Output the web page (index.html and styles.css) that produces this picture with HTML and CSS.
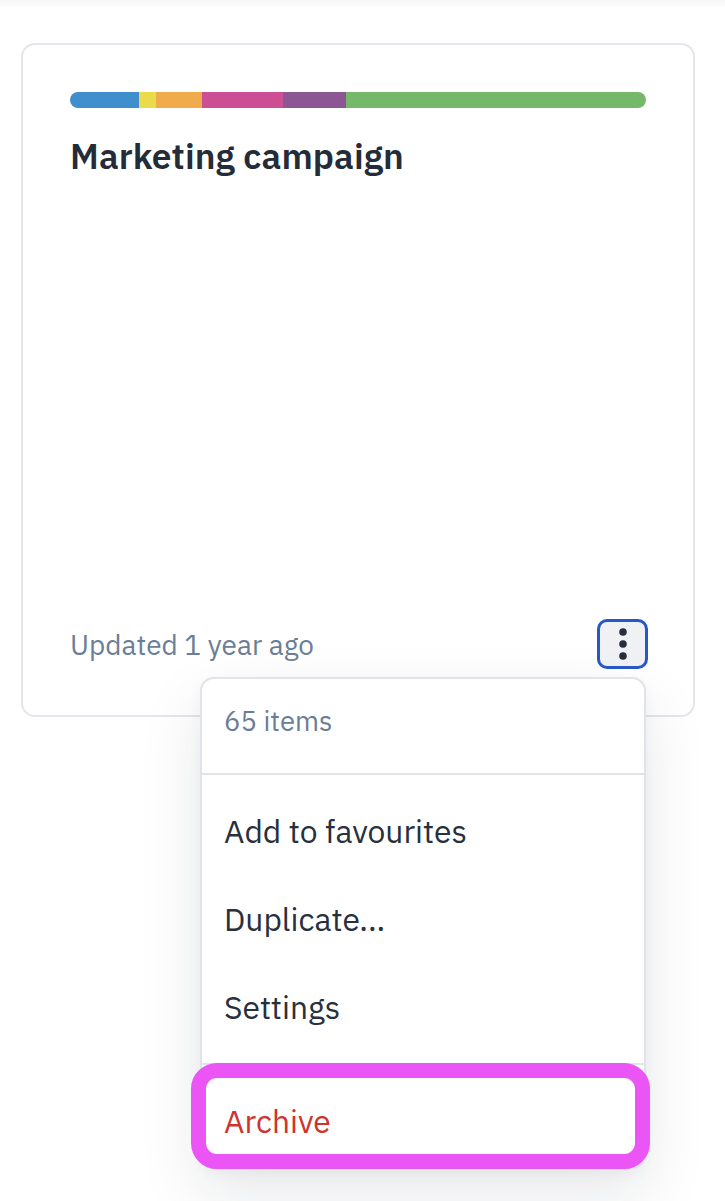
FILE: index.html
```html
<!DOCTYPE html>
<html>
<head>
<meta charset="utf-8">
<link rel="stylesheet" href="styles.css">
</head>
<body>
<div class="topbar"></div>
<main class="page">
  <div class="card-wrap">
    <article class="card">
      <div class="bar">
        <span class="seg" style="width:69px;background:#3f8fcf"></span>
        <span class="seg" style="width:17px;background:#eadb4a"></span>
        <span class="seg" style="width:46px;background:#efab4c"></span>
        <span class="seg" style="width:81px;background:#cc4f93"></span>
        <span class="seg" style="width:63px;background:#8c5594"></span>
        <span class="seg grow" style="background:#76b869"></span>
      </div>
      <h2 class="title">Marketing campaign</h2>
      <div class="spacer"></div>
      <div class="footer">
        <span class="updated">Updated 1 year ago</span>
        <button class="kebab" aria-label="More">
          <svg width="10" height="32" viewBox="0 0 10 32"><circle cx="5" cy="4" r="3.8" fill="#262f3b"/><circle cx="5" cy="16" r="3.8" fill="#262f3b"/><circle cx="5" cy="28" r="3.8" fill="#262f3b"/></svg>
        </button>
      </div>
    </article>
    <div class="menu">
      <div class="menu-head">65 items</div>
      <ul class="menu-group">
        <li class="item">Add to favourites</li>
        <li class="item">Duplicate...</li>
        <li class="item">Settings</li>
      </ul>
      <ul class="menu-group last">
        <li class="item danger">Archive</li>
      </ul>
      <div class="ring"></div>
    </div>
  </div>
</main>
</body>
</html>
```

FILE: styles.css
```css
html, body {
  margin: 0;
  padding: 0;
  background: #ffffff;
}
body {
  font-family: "IBM Plex Sans", Roboto, "Noto Sans", sans-serif;
  width: 725px;
  height: 1201px;
  overflow: hidden;
  position: relative;
}
.topbar {
  height: 6px;
  background: linear-gradient(#f7f7f8, #fbfbfc);
}
.page {
  padding: 37px 30px 0 21px;
}
.card-wrap {
  position: relative;
  width: 674px;
}
.card {
  box-sizing: border-box;
  width: 674px;
  height: 674px;
  border: 2px solid #e3e6eb;
  border-radius: 14px;
  padding: 47px 47px 47px 47px;
  display: flex;
  flex-direction: column;
  background: #fff;
}
.bar {
  display: flex;
  height: 16px;
  border-radius: 8px;
  overflow: hidden;
}
.seg {
  display: block;
  height: 100%;
}
.seg.grow { flex: 1; }
.title {
  margin: 26px 0 0 0;
  font-size: 35.3px;
  font-weight: 600;
  color: #232c38;
  line-height: 44px;
  letter-spacing: 0.1px;
}
.spacer { flex: 1; }
.footer {
  display: flex;
  align-items: center;
  justify-content: space-between;
}
.updated {
  font-size: 28px;
  color: #6b7e97;
  line-height: 34px;
  padding-top: 2px;
}
.kebab {
  box-sizing: border-box;
  width: 51px;
  height: 50px;
  margin-right: -2px;
  margin-bottom: -1px;
  border: 3.5px solid #2658c9;
  border-radius: 10px;
  background: #eff1f4;
  display: flex;
  align-items: center;
  justify-content: center;
  padding: 0;
}
.kebab svg { display: block; }
.menu {
  position: absolute;
  left: 179px;
  top: 634px;
  width: 446px;
  box-sizing: border-box;
  border: 2px solid #e0e4e9;
  border-radius: 14px;
  background: #fff;
  box-shadow: 0 26px 64px rgba(20, 30, 50, 0.10), 0 4px 14px rgba(20, 30, 50, 0.04);
}
.menu-head {
  font-size: 27.5px;
  line-height: 34px;
  color: #6b7d96;
  padding: 25px 22px 35px;
  border-bottom: 2px solid #e0e4e9;
}
.menu-group {
  list-style: none;
  margin: 0;
  padding: 12px 0 12px;
  border-bottom: 2px solid #e0e4e9;
}
.menu-group.last {
  border-bottom: 0;
  padding: 12px 0 2px;
}
.item {
  height: 88px;
  display: flex;
  align-items: center;
  padding: 0 22px;
  font-size: 31.8px;
  color: #27303c;
}
.item.danger { color: #cf3330; }
.ring {
  position: absolute;
  left: -11px;
  top: 384px;
  width: 459px;
  height: 106px;
  box-sizing: border-box;
  border: 15px solid #eb55f6;
  border-radius: 26px;
}
```
